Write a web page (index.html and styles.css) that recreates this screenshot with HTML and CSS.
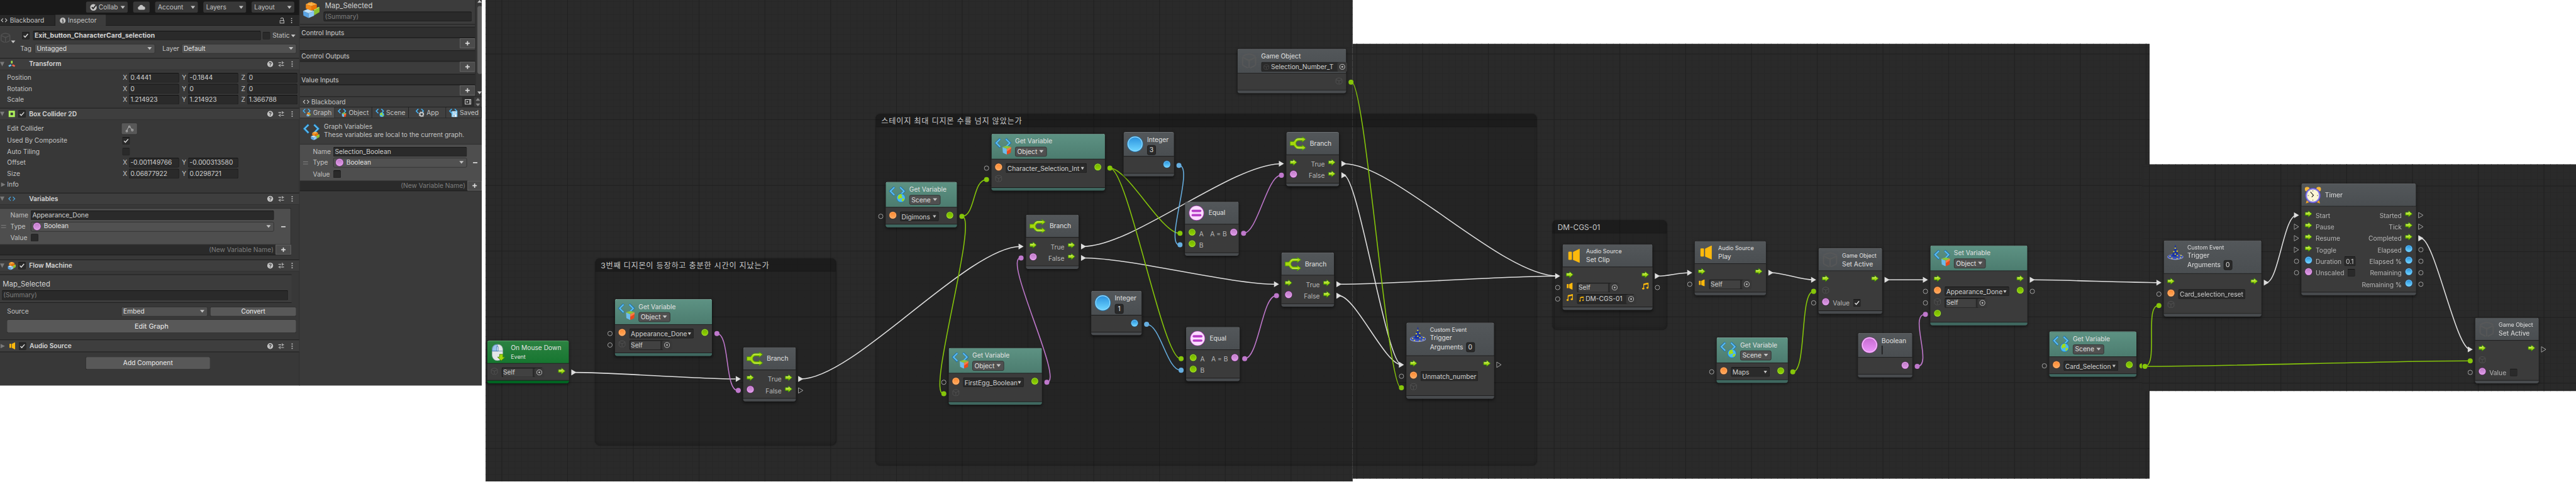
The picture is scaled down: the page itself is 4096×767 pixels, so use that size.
FILE: index.html
```html
<!DOCTYPE html>
<html lang="en">
<head>
<meta charset="utf-8">
<title>Map_Selected graph</title>
<link rel="stylesheet" href="styles.css">
</head>
<body>
<svg class="sprite" aria-hidden="true">
  <defs>
    <linearGradient id="gArrow" x1="0" y1="0" x2="0" y2="1"><stop offset="0" stop-color="#c6ec3a"/><stop offset="1" stop-color="#8cc800"/></linearGradient>
    <linearGradient id="gOrange" x1="0" y1="0" x2="0" y2="1"><stop offset="0" stop-color="#ff8a32"/><stop offset="1" stop-color="#ffa85c"/></linearGradient>
    <linearGradient id="gGreen" x1="0" y1="0" x2="0" y2="1"><stop offset="0" stop-color="#74b400"/><stop offset="1" stop-color="#92d400"/></linearGradient>
    <linearGradient id="gPurple" x1="0" y1="0" x2="0" y2="1"><stop offset="0" stop-color="#c07cc8"/><stop offset="1" stop-color="#dd98e6"/></linearGradient>
    <linearGradient id="gPink" x1="0" y1="0" x2="0" y2="1"><stop offset="0" stop-color="#c66cd2"/><stop offset="1" stop-color="#ea92f8"/></linearGradient>
    <linearGradient id="gBlue" x1="0" y1="0" x2="0" y2="1"><stop offset="0" stop-color="#2c93de"/><stop offset="1" stop-color="#6cd4ff"/></linearGradient>
  </defs>
  <symbol id="arrow" viewBox="0 0 14 13"><path d="M.8 3.8H6.5V.9L13.2 6.4 6.5 12V9.1H.8z" fill="url(#gArrow)" stroke="#3d8a06" stroke-width="1.1"/><path d="M1.8 5H7.4V3.2" fill="none" stroke="#e6f7a0" stroke-width=".8"/></symbol>
  <symbol id="orange" viewBox="0 0 14 14"><circle cx="7" cy="7" r="6.7" fill="#d96c1c"/><circle cx="7" cy="7" r="6" fill="#ffc08a"/><circle cx="7" cy="7" r="5.2" fill="url(#gOrange)"/></symbol>
  <symbol id="green" viewBox="0 0 14 14"><circle cx="7" cy="7" r="6.7" fill="#3f7d04"/><circle cx="7" cy="7" r="6" fill="#b4e050"/><circle cx="7" cy="7" r="5.2" fill="url(#gGreen)"/></symbol>
  <symbol id="purple" viewBox="0 0 14 14"><circle cx="7" cy="7" r="6.7" fill="#a03cae"/><circle cx="7" cy="7" r="6" fill="#f0bcf4"/><circle cx="7" cy="7" r="5.2" fill="url(#gPurple)"/></symbol>
  <symbol id="blue" viewBox="0 0 14 14"><circle cx="7" cy="7" r="6.7" fill="#1670b4"/><circle cx="7" cy="7" r="6" fill="#8ed2f8"/><circle cx="7" cy="7" r="5.2" fill="url(#gBlue)"/></symbol>
  <symbol id="bigblue" viewBox="0 0 30 30"><circle cx="15" cy="15" r="14.6" fill="#1f7fbe"/><circle cx="15" cy="15" r="13.6" fill="#a0e0ff"/><circle cx="15" cy="15" r="12.4" fill="url(#gBlue)"/></symbol>
  <symbol id="bigpink" viewBox="0 0 30 30"><circle cx="15" cy="15" r="14.8" fill="#9a3ca8"/><circle cx="15" cy="15" r="14" fill="#fbc4ff"/><circle cx="15" cy="15" r="12.4" fill="url(#gPink)"/></symbol>
  <symbol id="equal" viewBox="0 0 28 28"><circle cx="14" cy="14" r="13.8" fill="#a838b4"/><circle cx="14" cy="14" r="12.9" fill="#fbdcff"/><rect x="5" y="8" width="18" height="4.2" rx="2.1" fill="#b63cc6"/><rect x="5" y="15.8" width="18" height="4.2" rx="2.1" fill="#b63cc6"/></symbol>
  <symbol id="branch" viewBox="0 0 30 26"><path d="M.7 9.4H7.6C10 5.600 12 3.200 16.500 3.200h7.200L22.800.8 29.400 5.200 22.800 10.600l.6-2.800h-6.600c-3.600 0-5.300 2.600-5.300 5.200s1.700 5.200 5.300 5.200h6.600L22.800 15.400 29.400 20.800 22.800 25.400l.9-2.600H16.500C12 22.800 10 20.400 7.600 16.600H.7z" fill="#a6d80c" stroke="#4a9a04" stroke-width="1.1"/><path d="M11 6.600Q13.500 4.300 17 4.500h7M12.500 20.600q2 1 4.500.9h7" fill="none" stroke="#e4f6a0" stroke-width=".8"/></symbol>
  <symbol id="chev" viewBox="0 0 30 30"><path d="M10 1.300 2.200 9l7.800 8M20 1.300 27.800 9 20 17" fill="none" stroke="#1c6ea8" stroke-width="4"/><path d="M9.800 2 2.600 9l7.200 7.300M20.200 2 27.400 9l-7.200 7.300" fill="none" stroke="#5cbcf0" stroke-width="2.400"/></symbol>
  <symbol id="cube" viewBox="0 0 16 17"><path d="M0 3 8 6.400V17L.8 13.400z" fill="#6cbcec"/><path d="M16 3 8 6.400V17l7.200-3.600z" fill="#e8481c"/><path d="M0 3 8 .4 16 3 8 6.400z" fill="#8cc43c"/><path d="M8 6.400 16 3l-.2 3L8 11z" fill="#f87c48"/></symbol>
  <symbol id="globe" viewBox="0 0 17 17"><circle cx="8.500" cy="8.500" r="8.200" fill="#1c7ec4"/><circle cx="8.500" cy="8.500" r="7.200" fill="#48b8f4"/><path d="M4 3.600C6 1.400 9 1.200 10.600 1.800L9 4.800l2.400 1.400L9.600 9 6.600 8.600 5 11 2.600 8.400zM10 10.600l3.400-1.800 1.800 1.600-2 3.400-3 1.200z" fill="#a4dc18"/></symbol>
  <symbol id="var-obj" viewBox="0 0 30 30"><use href="#chev" width="30" height="30"/><use href="#cube" x="14" y="13.400" width="16" height="17"/></symbol>
  <symbol id="var-scene" viewBox="0 0 30 30"><use href="#chev" width="30" height="30"/><use href="#globe" x="13.400" y="13" width="17" height="17"/></symbol>
  <symbol id="lego" viewBox="0 0 30 30"><path d="M19 14l11-4v9l-10 6z" fill="#8cc030"/><path d="M19 14l9-4 2 .4-9 5z" fill="#c4ea6c"/><path d="M0 17l10 4v9L.6 25.400z" fill="#5aa4e4"/><path d="M10 21l10-4v8.600L10 30z" fill="#8ac6f6"/><path d="M0 17l9.600-4L20 17l-10 4z" fill="#bfe2fb"/><path d="M5 4.400 15 8v8.600L5 12.400z" fill="#f08a1c"/><path d="M15 8l10-3.600v8L15 16.600z" fill="#e87408"/><path d="M5 4.400 15 .6l10 3.800L15 8z" fill="#ffb650"/><ellipse cx="12" cy="2.800" rx="2.600" ry="1.500" fill="#ffa22c"/><ellipse cx="18" cy="4" rx="2.600" ry="1.500" fill="#ffa22c"/></symbol>
  <symbol id="var-graph" viewBox="0 0 30 30"><use href="#chev" width="30" height="30"/><use href="#lego" x="14" y="14" width="16" height="16"/></symbol>
  <symbol id="var-app" viewBox="0 0 30 30"><use href="#chev" width="30" height="30"/><circle cx="21" cy="20" r="6" fill="none" stroke="#c8c8c8" stroke-width="4"/><circle cx="21" cy="20" r="8.600" fill="none" stroke="#c8c8c8" stroke-width="3" stroke-dasharray="3.200 3.500"/></symbol>
  <symbol id="var-saved" viewBox="0 0 30 30"><use href="#chev" width="30" height="30"/><path d="M9 9h21v21H9z" fill="#6cc0f0"/><path d="M13 10h13v7H13zM13 20h13v10H13z" fill="#eef6fc"/><path d="M16 22h3v6h-3zM15 12h9v2h-9z" fill="#4088b8"/></symbol>
  <symbol id="ghost" viewBox="0 0 30 30"><g fill="none" stroke="#5a5a5a" stroke-width="2.400" opacity=".75"><path d="M3 8v13q0 2 2 3l8 4M27 8v13q0 2-2 3l-8 4"/><path d="M3 7Q9 3 15 2.500q6 .5 12 4.500M4 9l9 4.500h4L26 9M15 13.500V28"/></g></symbol>
  <symbol id="speaker" viewBox="0 0 22 26"><rect x=".5" y="5.500" width="6.500" height="15" rx="1.500" fill="#fdb90c"/><path d="M9 6 20.500.3q.7 0 .7.700v24q0 .7-.7.700L9 20.500z" fill="#fdb90c"/></symbol>
  <symbol id="note" viewBox="0 0 12 13"><path d="M3 11V3l8-2v8.600" fill="none" stroke="#fdb90c" stroke-width="1.400"/><path d="M3.200 1.800 11.600.2v2.600L3.200 4.600z" fill="#fdb90c"/><ellipse cx="2.200" cy="11" rx="2" ry="1.700" fill="#fdb90c"/><ellipse cx="9.800" cy="9.600" rx="2" ry="1.700" fill="#fdb90c"/></symbol>
  <symbol id="hat" viewBox="0 0 30 30"><ellipse cx="15" cy="24" rx="14.600" ry="5.400" fill="#8a96dc"/><ellipse cx="15" cy="23.400" rx="13.600" ry="4.400" fill="#3a50b4"/><path d="M15 1Q17.500 13 21.500 22q-6.500 3.500-13 0Q12.500 13 15 1z" fill="#1c34a0"/><path d="M13.500 7h2.500v2h-2.500zM17 12.500h2.500v2H17zM11 13.500h2.500v2H11zM13.500 18h2.500v2h-2.500zM17.500 20.500h2.500v2h-2.500zM4 22h2.500v1.800H4zM24 20.500h2.500v1.800H24zM7.500 25.500H10v1.800H7.500zM17 26.500h2.500V28H17zM23 24.500h2.500v1.600H23z" fill="#f4e624"/></symbol>
  <symbol id="clock" viewBox="0 0 30 31"><circle cx="4.500" cy="4.500" r="4.300" fill="#f6b83c"/><circle cx="25.500" cy="4.500" r="4.300" fill="#f6b83c"/><path d="M2 30.500 4 24l5 4zM28 30.500 26 24l-5 4z" fill="#f0a428"/><circle cx="15" cy="16" r="14" fill="#5a4cc8"/><circle cx="15" cy="16" r="12.800" fill="#8c84ec"/><circle cx="15" cy="16" r="11" fill="#fbf6d4"/><path d="M10.500 9.500 16 15.500 12.800 18.800" fill="none" stroke="#222" stroke-width="1.300"/><path d="M15 6.500v2M15 23.500v2M5.500 16h2M22.500 16h2" stroke="#444" stroke-width=".9"/></symbol>
  <symbol id="mouse" viewBox="0 0 25 31"><path d="M10.500.8C16 .8 20 4 20.300 10v9c0 7-4 11.500-9.800 11.500S.8 26 .8 19v-9C1.100 4 5 .8 10.500.8z" fill="#e4e6e8" stroke="#9aa"/><path d="M10.500 1C5 1 1.100 4 1 13h9.500z" fill="#9cc4ec" stroke="#3a6ca8" stroke-width=".8"/><path d="M1 13h19.200M9 5h3v8H9z" stroke="#4a7ab0" stroke-width=".8" fill="#c4dcf4"/><path d="M14.500 19h6v5h4L17.500 30.500 10.800 24h3.700z" fill="#a2d80c" stroke="#4a8a04"/></symbol>
  <symbol id="tri" viewBox="0 0 10 12"><path d="M.3.5 9.600 6 .3 11.500z" fill="#dedede"/></symbol>
  <symbol id="trio" viewBox="0 0 10 12"><path d="M.8 1 9 6 .8 11z" fill="none" stroke="#b4b4b4"/></symbol>
  <symbol id="ring" viewBox="0 0 10 12"><circle cx="5" cy="6" r="4.100" fill="none" stroke="#b4b4b4"/></symbol>
  <symbol id="dot" viewBox="0 0 10 12"><circle cx="5" cy="6" r="4.600" fill="currentColor"/></symbol>
  <symbol id="check" viewBox="0 0 14 14"><path d="M3.300 7.200 5.800 9.900 10.900 4" fill="none" stroke="#e4e4e4" stroke-width="1.600"/></symbol>
  <symbol id="target" viewBox="0 0 12 12"><circle cx="6" cy="6" r="4.600" fill="none" stroke="#c4c4c4" stroke-width="1.100"/><circle cx="6" cy="6" r="1.500" fill="#c4c4c4"/></symbol>
  <symbol id="help" viewBox="0 0 12 12"><circle cx="6" cy="6" r="5.400" fill="#c4c4c4"/><path d="M4.200 4.700Q4.300 3 6 3t1.800 1.500Q7.800 5.600 6 6.400V7.300M6 8.100v1.300" fill="none" stroke="#3a3a3a" stroke-width="1.300"/></symbol>
  <symbol id="sliders" viewBox="0 0 12 12"><path d="M1 3.500h5M8.500 3.500H11M1 8.500h2.500M6 8.500h5M8 1v5M4 6v5" stroke="#c4c4c4" stroke-width="1.300"/></symbol>
  <symbol id="kebab" viewBox="0 0 4 12"><path d="M1 1h2v2H1zM1 5h2v2H1zM1 9h2v2H1z" fill="#c4c4c4"/></symbol>
  <symbol id="code" viewBox="0 0 14 10"><path d="M5 1.500 1.500 5 5 8.500M9 1.500 12.500 5 9 8.500" fill="none" stroke="currentColor" stroke-width="1.400"/></symbol>
</svg>

<div class="screen">
<div class="stage">
  <section class="inspector">
    <div class="topbar">
      <span class="tb collab"><svg width="13" height="13" viewBox="0 0 13 13"><circle cx="6.500" cy="6.500" r="6" fill="#c4c4c4"/><path d="M3.500 6 6 8.800 11 2.500" fill="none" stroke="#222" stroke-width="2"/></svg>Collab<i class="dn"></i></span>
      <span class="tb cloud"><svg width="14" height="10" viewBox="0 0 14 10"><path d="M3.500 10a3.300 3.300 0 0 1-.4-6.500A4 4 0 0 1 10.600 3.800 3.100 3.100 0 0 1 10.800 10z" fill="#c4c4c4"/></svg></span>
      <span class="tb drop">Account<i class="dn"></i></span>
      <span class="tb drop">Layers<i class="dn"></i></span>
      <span class="tb drop">Layout<i class="dn"></i></span>
    </div>
    <div class="tabs">
      <span class="tab t1"><svg width="13" height="10"><use href="#code"/></svg>Blackboard</span>
      <span class="tab t2"><svg width="11" height="11" viewBox="0 0 11 11"><circle cx="5.500" cy="5.500" r="5.300" fill="#c4c4c4"/><path d="M4 4.800h2v3.600M4 8.400h3.400M4.900 2.700h1.200" stroke="#333" stroke-width="1.300" fill="none"/></svg>Inspector</span>
      <span class="grow"></span>
      <svg width="9" height="11" viewBox="0 0 9 11"><path d="M.7 5.500h7.600v4.800H.7zM2.200 2.800Q2.500.8 4.800.8T7 3v2.500" fill="none" stroke="#c4c4c4" stroke-width="1.200"/></svg>
      <svg class="kb" width="4" height="11"><use href="#kebab"/></svg>
    </div>
    <div class="objhead">
      <div class="objicon"><svg width="20" height="20"><use href="#ghost"/></svg><i class="dn"></i></div>
      <div class="objrows">
        <div class="orow r1"><span class="cb"><svg width="14" height="14"><use href="#check"/></svg></span><span class="inp bold">Exit_button_CharacterCard_selection</span><span class="cb"></span><span class="st">Static</span><i class="dn"></i></div>
        <div class="orow r2"><span class="lb">Tag</span><span class="sel tag">Untagged<i class="dn"></i></span><span class="lb2">Layer</span><span class="sel layer">Default<i class="dn"></i></span></div>
      </div>
    </div>

    <div class="comp"><i class="fold"></i><svg class="ci" width="14" height="14" viewBox="0 0 14 14"><path d="M7 1v5" stroke="#a4e04c" stroke-width="3"/><path d="M6 8.500 1.500 11" stroke="#6cc4f4" stroke-width="3"/><path d="M8 8.500l4.500 2.500" stroke="#f4684c" stroke-width="3"/></svg><span class="cb none"></span><b>Transform</b><span class="grow"></span><span class="acts"><svg width="12" height="12"><use href="#help"/></svg><svg width="12" height="12"><use href="#sliders"/></svg><svg width="4" height="12"><use href="#kebab"/></svg></span></div>
    <div class="props transform">
      <div class="prop"><span class="pl">Position</span><em>X</em><span class="inp">0.4441</span><em>Y</em><span class="inp">-0.1844</span><em>Z</em><span class="inp">0</span></div>
      <div class="prop"><span class="pl">Rotation</span><em>X</em><span class="inp">0</span><em>Y</em><span class="inp">0</span><em>Z</em><span class="inp">0</span></div>
      <div class="prop"><span class="pl">Scale</span><em>X</em><span class="inp">1.214923</span><em>Y</em><span class="inp">1.214923</span><em>Z</em><span class="inp">1.366788</span></div>
    </div>

    <div class="comp"><i class="fold"></i><svg class="ci" width="14" height="14" viewBox="0 0 14 14"><path d="M3 3h8v8H3z" fill="#3a3a3a" stroke="#aef25c" stroke-width="3.400"/></svg><span class="cb"><svg width="14" height="14"><use href="#check"/></svg></span><b>Box Collider 2D</b><span class="grow"></span><span class="acts"><svg width="12" height="12"><use href="#help"/></svg><svg width="12" height="12"><use href="#sliders"/></svg><svg width="4" height="12"><use href="#kebab"/></svg></span></div>
    <div class="props collider">
      <div class="prop edit"><span class="pl">Edit Collider</span><span class="ebtn"><svg width="15" height="13" viewBox="0 0 15 13"><path d="M2.500 9 6 2.500h2l4 6" fill="none" stroke="#c8c8c8"/><path d="M1 9h2.500v2.800H1zM5.800 1h2.500v2.500H5.800zM11 7h2.800v3H11z" fill="#585858" stroke="#c8c8c8"/></svg></span></div>
      <div class="prop"><span class="pl">Used By Composite</span><span class="cb c2"><svg width="14" height="14"><use href="#check"/></svg></span></div>
      <div class="prop"><span class="pl">Auto Tiling</span><span class="cb c2"></span></div>
      <div class="prop"><span class="pl">Offset</span><em>X</em><span class="inp">-0.001149766</span><em>Y</em><span class="inp">-0.000313580</span></div>
      <div class="prop"><span class="pl">Size</span><em>X</em><span class="inp">0.06877922</span><em>Y</em><span class="inp">0.0298721</span></div>
      <div class="prop info"><i class="fold side"></i><span>Info</span></div>
    </div>

    <div class="comp"><i class="fold"></i><svg class="ci blue" width="14" height="10"><use href="#code"/></svg><span class="cb none"></span><b>Variables</b><span class="grow"></span><span class="acts"><svg width="12" height="12"><use href="#help"/></svg><svg width="12" height="12"><use href="#sliders"/></svg><svg width="4" height="12"><use href="#kebab"/></svg></span></div>
    <div class="varlist">
      <div class="varcard">
        <i class="grip"></i>
        <div class="vrows">
          <div class="vrow"><span class="vl">Name</span><span class="inp">Appearance_Done</span></div>
          <div class="vrow"><span class="vl">Type</span><span class="sel"><svg width="15" height="15"><use href="#purple"/></svg>Boolean<i class="dn"></i></span></div>
          <div class="vrow"><span class="vl">Value</span><span class="cb"></span></div>
        </div>
        <span class="minus"></span>
      </div>
      <div class="newvar"><span>(New Variable Name)</span><i class="plus"></i></div>
    </div>

    <div class="comp"><i class="fold"></i><svg class="ci" width="15" height="15"><use href="#lego"/></svg><span class="cb"><svg width="14" height="14"><use href="#check"/></svg></span><b>Flow Machine</b><span class="grow"></span><span class="acts"><svg width="12" height="12"><use href="#help"/></svg><svg width="12" height="12"><use href="#sliders"/></svg><svg width="4" height="12"><use href="#kebab"/></svg></span></div>
    <div class="machine">
      <div class="mbox"><span class="mt">Map_Selected</span><span class="inp dim">(Summary)</span></div>
      <div class="mrow"><span class="pl">Source</span><span class="sel">Embed<i class="dn"></i></span><span class="btn">Convert</span></div>
      <span class="btn wide">Edit Graph</span>
    </div>

    <div class="comp last"><i class="fold side"></i><svg class="ci" width="11" height="13"><use href="#speaker"/></svg><span class="cb"><svg width="14" height="14"><use href="#check"/></svg></span><b>Audio Source</b><span class="grow"></span><span class="acts"><svg width="12" height="12"><use href="#help"/></svg><svg width="12" height="12"><use href="#sliders"/></svg><svg width="4" height="12"><use href="#kebab"/></svg></span></div>
    <div class="addrow"><span class="btn add">Add Component</span></div>
  </section>

  <section class="board">
    <div class="gtop">
      <div class="gmain">
        <div class="ghead"><svg width="30" height="30"><use href="#lego"/></svg><div><span class="mt">Map_Selected</span><span class="inp dim">(Summary)</span></div></div>
        <div class="plist"><h4>Control Inputs</h4><div><i class="plus"></i></div></div>
        <div class="plist"><h4>Control Outputs</h4><div><i class="plus"></i></div></div>
        <div class="plist"><h4>Value Inputs</h4><div><i class="plus"></i></div></div>
      </div>
      <div class="scroll"><i class="up"></i><span></span><i class="dn"></i></div>
    </div>
    <div class="bbar"><svg width="13" height="10"><use href="#code"/></svg><span>Blackboard</span><span class="dock"><svg width="12" height="10" viewBox="0 0 12 10"><path d="M.7.7h10.600v8.600H.7zM9 1v8" fill="none" stroke="#d0d0d0" stroke-width="1.300"/><path d="M3.500 3l3 2-3 2z" fill="#d0d0d0"/></svg></span><span class="spin"><i class="up"></i><i class="dn"></i></span></div>
    <div class="vtabs">
      <span class="on"><svg width="15" height="15"><use href="#var-graph"/></svg>Graph</span>
      <span><svg width="16" height="16"><use href="#var-obj"/></svg>Object</span>
      <span><svg width="16" height="16"><use href="#var-scene"/></svg>Scene</span>
      <span><svg width="16" height="16"><use href="#var-app"/></svg>App</span>
      <span><svg width="16" height="16"><use href="#var-saved"/></svg>Saved</span>
    </div>
    <div class="vinfo"><svg width="30" height="30"><use href="#var-graph"/></svg><div><p>Graph Variables</p><p class="sub">These variables are local to the current graph.</p></div></div>
    <div class="varcard">
      <i class="grip"></i>
      <div class="vrows">
        <div class="vrow"><span class="vl">Name</span><span class="inp">Selection_Boolean</span></div>
        <div class="vrow"><span class="vl">Type</span><span class="sel"><svg width="15" height="15"><use href="#purple"/></svg>Boolean<i class="dn"></i></span></div>
        <div class="vrow"><span class="vl">Value</span><span class="cb"></span></div>
      </div>
      <span class="minus"></span>
    </div>
    <div class="newvar"><span>(New Variable Name)</span><i class="plus"></i></div>
  </section>

  <section class="graph">
    <div class="pane pane-a"></div>
    <div class="pane pane-b"></div>
    <div class="pane pane-c"></div>

    <div class="group g-appear"><h3>3번째 디지몬이 등장하고 충분한 시간이 지났는가</h3></div>
    <div class="group g-stage"><h3>스테이지 최대 디지몬 수를 넘지 않았는가</h3></div>
    <div class="group g-clip"><h3>DM-CGS-01</h3></div>

    <svg class="edges" width="4700" height="880" viewBox="0 0 4700 880">
      <g class="ew">
        <path d="M1047 680C1122 680 1267 692 1342 692"/>
        <path d="M1461 692C1558 692 1766 450 1862 450"/>
        <path d="M1977 450C2067 450 2247 299 2338 299"/>
        <path d="M1977 471C2065 471 2240 519 2329 519"/>
        <path d="M2452 299C2545 299 2740 504 2842 504"/>
        <path d="M2452 320C2478 320 2530 666 2557 666"/>
        <path d="M2443 519C2543 519 2742 504 2842 504"/>
        <path d="M2443 540C2473 540 2527 666 2557 666"/>
        <path d="M3024 504C3046 504 3060 498 3083 498"/>
        <path d="M3231 498C3256 498 3283 511 3309 511"/>
        <path d="M3443 511H3513"/>
        <path d="M3708 511C3768 511 3880 516 3939 516"/>
        <path d="M4135 516C4157 516 4167 393 4190 393"/>
        <path d="M4417 435C4442 435 4481 638 4507 638"/>
      </g>
      <g class="eg">
        <path d="M1755 395C1780 395 1774 328 1800 328"/>
        <path d="M1755 395C1787 395 1690 719 1721 719"/>
        <path d="M2025 307C2058 307 2119 426 2152 426"/>
        <path d="M2025 307C2058 307 2121 655 2154 655"/>
        <path d="M2466 150C2491 150 2531 708 2556 708"/>
        <path d="M3271 679C3297 679 3283 532 3309 532"/>
        <path d="M3913 669C3939 669 3912 558 3938 558"/>
        <path d="M3913 669C4060 669 4360 659 4506 659"/>
      </g>
      <g class="ep">
        <path d="M1308 609C1332 609 1322 713 1346 713"/>
        <path d="M1910 698C1943 698 1829 471 1862 471"/>
        <path d="M2269 426C2294 426 2312 320 2337 320"/>
        <path d="M2271 655C2296 655 2303 540 2328 540"/>
        <path d="M3498 669C3527 669 3483 574 3512 574"/>
      </g>
      <g class="eb">
        <path d="M2151 302C2180 302 2124 447 2152 447"/>
        <path d="M2092 592C2117 592 2129 676 2154 676"/>
      </g>
      <path d="M3908 663.500a4.600 4.600 0 0 0 0 9.200z" fill="#86c60a"/>
      <circle cx="3913.500" cy="669" r="4.600" fill="#86c60a"/>
    </svg>

    <article class="node event n-down">
      <header><svg width="25" height="31"><use href="#mouse"/></svg><div><p>On Mouse Down</p><p class="sm">Event</p></div></header>
      <div class="body">
        <div class="row"><svg class="ic gh" width="14" height="14"><use href="#ghost"/></svg><span class="obj"><i>Self</i><b><svg width="12" height="12"><use href="#target"/></svg></b></span><span class="grow"></span><svg class="ic" width="14" height="13"><use href="#arrow"/></svg><svg class="pt out"><use href="#tri"/></svg></div>
      </div>
    </article>

    <article class="node teal n-appear">
      <header><svg width="30" height="30"><use href="#var-obj"/></svg><div><p>Get Variable</p><span class="kind">Object<i class="dn"></i></span></div></header>
      <div class="body">
        <div class="row"><svg class="pt in"><use href="#ring"/></svg><svg class="ic" width="14" height="14"><use href="#orange"/></svg><span class="combo">Appearance_Done<i class="dn"></i></span><svg class="ic" width="14" height="14"><use href="#green"/></svg><svg class="pt out p"><use href="#dot"/></svg></div>
        <div class="row"><svg class="pt in"><use href="#ring"/></svg><svg class="ic gh" width="14" height="14"><use href="#ghost"/></svg><span class="obj"><i>Self</i><b><svg width="12" height="12"><use href="#target"/></svg></b></span></div>
      </div>
    </article>

    <article class="node n-branch1">
      <header><svg width="30" height="26"><use href="#branch"/></svg><div><p>Branch</p></div></header>
      <div class="body">
        <div class="row"><svg class="pt in"><use href="#tri"/></svg><svg class="ic" width="14" height="13"><use href="#arrow"/></svg><span class="grow"></span><span class="tx">True</span><svg class="ic" width="14" height="13"><use href="#arrow"/></svg><svg class="pt out"><use href="#tri"/></svg></div>
        <div class="row"><svg class="pt in p"><use href="#dot"/></svg><svg class="ic" width="14" height="14"><use href="#purple"/></svg><span class="grow"></span><span class="tx">False</span><svg class="ic" width="14" height="13"><use href="#arrow"/></svg><svg class="pt out"><use href="#trio"/></svg></div>
      </div>
    </article>

    <article class="node teal n-digimons">
      <header><svg width="30" height="30"><use href="#var-scene"/></svg><div><p>Get Variable</p><span class="kind">Scene<i class="dn"></i></span></div></header>
      <div class="body">
        <div class="row"><svg class="pt in"><use href="#ring"/></svg><svg class="ic" width="14" height="14"><use href="#orange"/></svg><span class="combo">Digimons<i class="dn"></i></span><svg class="ic" width="14" height="14"><use href="#green"/></svg><svg class="pt out g"><use href="#dot"/></svg></div>
      </div>
    </article>

    <article class="node teal n-charsel">
      <header><svg width="30" height="30"><use href="#var-obj"/></svg><div><p>Get Variable</p><span class="kind">Object<i class="dn"></i></span></div></header>
      <div class="body">
        <div class="row"><svg class="pt in"><use href="#ring"/></svg><svg class="ic" width="14" height="14"><use href="#orange"/></svg><span class="combo">Character_Selection_Int<i class="dn"></i></span><svg class="ic" width="14" height="14"><use href="#green"/></svg><svg class="pt out g"><use href="#dot"/></svg></div>
        <div class="row"><svg class="pt in g"><use href="#dot"/></svg><svg class="ic gh" width="14" height="14"><use href="#ghost"/></svg></div>
      </div>
    </article>

    <article class="node n-branch2">
      <header><svg width="30" height="26"><use href="#branch"/></svg><div><p>Branch</p></div></header>
      <div class="body">
        <div class="row"><svg class="pt in"><use href="#tri"/></svg><svg class="ic" width="14" height="13"><use href="#arrow"/></svg><span class="grow"></span><span class="tx">True</span><svg class="ic" width="14" height="13"><use href="#arrow"/></svg><svg class="pt out"><use href="#tri"/></svg></div>
        <div class="row"><svg class="pt in p"><use href="#dot"/></svg><svg class="ic" width="14" height="14"><use href="#purple"/></svg><span class="grow"></span><span class="tx">False</span><svg class="ic" width="14" height="13"><use href="#arrow"/></svg><svg class="pt out"><use href="#tri"/></svg></div>
      </div>
    </article>

    <article class="node teal n-egg">
      <header><svg width="30" height="30"><use href="#var-obj"/></svg><div><p>Get Variable</p><span class="kind">Object<i class="dn"></i></span></div></header>
      <div class="body">
        <div class="row"><svg class="pt in"><use href="#ring"/></svg><svg class="ic" width="14" height="14"><use href="#orange"/></svg><span class="combo">FirstEgg_Boolean<i class="dn"></i></span><svg class="ic" width="14" height="14"><use href="#green"/></svg><svg class="pt out p"><use href="#dot"/></svg></div>
        <div class="row"><svg class="pt in g"><use href="#dot"/></svg><svg class="ic gh" width="14" height="14"><use href="#ghost"/></svg></div>
      </div>
    </article>

    <article class="node lit n-int3">
      <header><svg width="30" height="30"><use href="#bigblue"/></svg><div><p>Integer</p><span class="num">3</span></div></header>
      <div class="body"><div class="row"><span class="grow"></span><svg class="ic" width="14" height="14"><use href="#blue"/></svg><svg class="pt out b"><use href="#dot"/></svg></div></div>
    </article>

    <article class="node lit n-int1">
      <header><svg width="30" height="30"><use href="#bigblue"/></svg><div><p>Integer</p><span class="num">1</span></div></header>
      <div class="body"><div class="row"><span class="grow"></span><svg class="ic" width="14" height="14"><use href="#blue"/></svg><svg class="pt out b"><use href="#dot"/></svg></div></div>
    </article>

    <article class="node n-equal1">
      <header><svg width="30" height="28"><use href="#equal"/></svg><div><p>Equal</p></div></header>
      <div class="body">
        <div class="row"><svg class="pt in g"><use href="#dot"/></svg><svg class="ic" width="14" height="14"><use href="#green"/></svg><span class="tx">A</span><span class="grow"></span><span class="tx">A = B</span><svg class="ic" width="14" height="14"><use href="#purple"/></svg><svg class="pt out p"><use href="#dot"/></svg></div>
        <div class="row"><svg class="pt in b"><use href="#dot"/></svg><svg class="ic" width="14" height="14"><use href="#green"/></svg><span class="tx">B</span></div>
      </div>
    </article>

    <article class="node n-equal2">
      <header><svg width="30" height="28"><use href="#equal"/></svg><div><p>Equal</p></div></header>
      <div class="body">
        <div class="row"><svg class="pt in g"><use href="#dot"/></svg><svg class="ic" width="14" height="14"><use href="#green"/></svg><span class="tx">A</span><span class="grow"></span><span class="tx">A = B</span><svg class="ic" width="14" height="14"><use href="#purple"/></svg><svg class="pt out p"><use href="#dot"/></svg></div>
        <div class="row"><svg class="pt in b"><use href="#dot"/></svg><svg class="ic" width="14" height="14"><use href="#green"/></svg><span class="tx">B</span></div>
      </div>
    </article>

    <article class="node n-branch3">
      <header><svg width="30" height="26"><use href="#branch"/></svg><div><p>Branch</p></div></header>
      <div class="body">
        <div class="row"><svg class="pt in"><use href="#tri"/></svg><svg class="ic" width="14" height="13"><use href="#arrow"/></svg><span class="grow"></span><span class="tx">True</span><svg class="ic" width="14" height="13"><use href="#arrow"/></svg><svg class="pt out"><use href="#tri"/></svg></div>
        <div class="row"><svg class="pt in p"><use href="#dot"/></svg><svg class="ic" width="14" height="14"><use href="#purple"/></svg><span class="grow"></span><span class="tx">False</span><svg class="ic" width="14" height="13"><use href="#arrow"/></svg><svg class="pt out"><use href="#tri"/></svg></div>
      </div>
    </article>

    <article class="node n-branch4">
      <header><svg width="30" height="26"><use href="#branch"/></svg><div><p>Branch</p></div></header>
      <div class="body">
        <div class="row"><svg class="pt in"><use href="#tri"/></svg><svg class="ic" width="14" height="13"><use href="#arrow"/></svg><span class="grow"></span><span class="tx">True</span><svg class="ic" width="14" height="13"><use href="#arrow"/></svg><svg class="pt out"><use href="#tri"/></svg></div>
        <div class="row"><svg class="pt in p"><use href="#dot"/></svg><svg class="ic" width="14" height="14"><use href="#purple"/></svg><span class="grow"></span><span class="tx">False</span><svg class="ic" width="14" height="13"><use href="#arrow"/></svg><svg class="pt out"><use href="#tri"/></svg></div>
      </div>
    </article>

    <article class="node lit n-gobj">
      <header><svg width="30" height="30"><use href="#ghost"/></svg><div><p>Game Object</p><span class="asset"><svg width="11" height="11"><use href="#ghost"/></svg><i>Selection_Number_T</i><b><svg width="12" height="12"><use href="#target"/></svg></b></span></div></header>
      <div class="body"><div class="row"><span class="grow"></span><svg class="ic gh" width="14" height="14"><use href="#ghost"/></svg><svg class="pt out g"><use href="#dot"/></svg></div></div>
    </article>

    <article class="node trig n-trig1">
      <header><svg width="30" height="30"><use href="#hat"/></svg><div><p class="sm">Custom Event</p><p>Trigger</p><p>Arguments <span class="num">0</span></p></div></header>
      <div class="body">
        <div class="row"><svg class="pt in"><use href="#tri"/></svg><svg class="ic" width="14" height="13"><use href="#arrow"/></svg><span class="grow"></span><svg class="ic" width="14" height="13"><use href="#arrow"/></svg><svg class="pt out"><use href="#trio"/></svg></div>
        <div class="row"><svg class="pt in"><use href="#ring"/></svg><svg class="ic" width="14" height="14"><use href="#orange"/></svg><span class="field">Unmatch_number</span></div>
        <div class="row"><svg class="pt in g"><use href="#dot"/></svg><svg class="ic gh" width="14" height="14"><use href="#ghost"/></svg></div>
      </div>
    </article>

    <article class="node two n-clip">
      <header><svg width="30" height="26"><use href="#speaker"/></svg><div><p class="sm">Audio Source</p><p>Set Clip</p></div></header>
      <div class="body">
        <div class="row"><svg class="pt in"><use href="#tri"/></svg><svg class="ic" width="14" height="13"><use href="#arrow"/></svg><span class="grow"></span><svg class="ic" width="14" height="13"><use href="#arrow"/></svg><svg class="pt out"><use href="#tri"/></svg></div>
        <div class="row"><svg class="pt in"><use href="#ring"/></svg><svg class="ic" width="14" height="13"><use href="#speaker"/></svg><span class="obj"><i>Self</i><b><svg width="12" height="12"><use href="#target"/></svg></b></span><span class="grow"></span><svg class="ic" width="14" height="13"><use href="#note"/></svg><svg class="pt out"><use href="#ring"/></svg></div>
        <div class="row"><svg class="pt in"><use href="#ring"/></svg><svg class="ic" width="14" height="13"><use href="#note"/></svg><span class="asset"><svg width="9" height="10"><use href="#note"/></svg><i>DM-CGS-01</i><b><svg width="12" height="12"><use href="#target"/></svg></b></span></div>
      </div>
    </article>

    <article class="node two n-play">
      <header><svg width="30" height="26"><use href="#speaker"/></svg><div><p class="sm">Audio Source</p><p>Play</p></div></header>
      <div class="body">
        <div class="row"><svg class="pt in"><use href="#tri"/></svg><svg class="ic" width="14" height="13"><use href="#arrow"/></svg><span class="grow"></span><svg class="ic" width="14" height="13"><use href="#arrow"/></svg><svg class="pt out"><use href="#tri"/></svg></div>
        <div class="row"><svg class="pt in"><use href="#ring"/></svg><svg class="ic" width="14" height="13"><use href="#speaker"/></svg><span class="obj"><i>Self</i><b><svg width="12" height="12"><use href="#target"/></svg></b></span></div>
      </div>
    </article>

    <article class="node teal n-maps">
      <header><svg width="30" height="30"><use href="#var-scene"/></svg><div><p>Get Variable</p><span class="kind">Scene<i class="dn"></i></span></div></header>
      <div class="body">
        <div class="row"><svg class="pt in"><use href="#ring"/></svg><svg class="ic" width="14" height="14"><use href="#orange"/></svg><span class="combo">Maps<i class="dn"></i></span><svg class="ic" width="14" height="14"><use href="#green"/></svg><svg class="pt out g"><use href="#dot"/></svg></div>
      </div>
    </article>

    <article class="node two n-active1">
      <header><svg width="30" height="30"><use href="#ghost"/></svg><div><p class="sm">Game Object</p><p>Set Active</p></div></header>
      <div class="body">
        <div class="row"><svg class="pt in"><use href="#tri"/></svg><svg class="ic" width="14" height="13"><use href="#arrow"/></svg><span class="grow"></span><svg class="ic" width="14" height="13"><use href="#arrow"/></svg><svg class="pt out"><use href="#tri"/></svg></div>
        <div class="row"><svg class="pt in g"><use href="#dot"/></svg><svg class="ic gh" width="14" height="14"><use href="#ghost"/></svg></div>
        <div class="row"><svg class="pt in"><use href="#ring"/></svg><svg class="ic" width="14" height="14"><use href="#purple"/></svg><span class="tx">Value</span><span class="cb"><svg width="14" height="14"><use href="#check"/></svg></span></div>
      </div>
    </article>

    <article class="node n-bool lit">
      <header><svg width="30" height="30"><use href="#bigpink"/></svg><div><p>Boolean</p><span class="cb"></span></div></header>
      <div class="body"><div class="row"><span class="grow"></span><svg class="ic" width="14" height="14"><use href="#purple"/></svg><svg class="pt out p"><use href="#dot"/></svg></div></div>
    </article>

    <article class="node teal n-setvar">
      <header><svg width="30" height="30"><use href="#var-obj"/></svg><div><p>Set Variable</p><span class="kind">Object<i class="dn"></i></span></div></header>
      <div class="body">
        <div class="row"><svg class="pt in"><use href="#tri"/></svg><svg class="ic" width="14" height="13"><use href="#arrow"/></svg><span class="grow"></span><svg class="ic" width="14" height="13"><use href="#arrow"/></svg><svg class="pt out"><use href="#tri"/></svg></div>
        <div class="row"><svg class="pt in"><use href="#ring"/></svg><svg class="ic" width="14" height="14"><use href="#orange"/></svg><span class="combo">Appearance_Done<i class="dn"></i></span><svg class="ic" width="14" height="14"><use href="#green"/></svg><svg class="pt out"><use href="#ring"/></svg></div>
        <div class="row"><svg class="pt in"><use href="#ring"/></svg><svg class="ic gh" width="14" height="14"><use href="#ghost"/></svg><span class="obj"><i>Self</i><b><svg width="12" height="12"><use href="#target"/></svg></b></span></div>
        <div class="row"><svg class="pt in p"><use href="#dot"/></svg><svg class="ic" width="14" height="14"><use href="#green"/></svg></div>
      </div>
    </article>

    <article class="node teal n-card">
      <header><svg width="30" height="30"><use href="#var-scene"/></svg><div><p>Get Variable</p><span class="kind">Scene<i class="dn"></i></span></div></header>
      <div class="body">
        <div class="row"><svg class="pt in"><use href="#ring"/></svg><svg class="ic" width="14" height="14"><use href="#orange"/></svg><span class="combo">Card_Selection<i class="dn"></i></span><svg class="ic" width="14" height="14"><use href="#green"/></svg></div>
      </div>
    </article>

    <article class="node trig n-trig2">
      <header><svg width="30" height="30"><use href="#hat"/></svg><div><p class="sm">Custom Event</p><p>Trigger</p><p>Arguments <span class="num">0</span></p></div></header>
      <div class="body">
        <div class="row"><svg class="pt in"><use href="#tri"/></svg><svg class="ic" width="14" height="13"><use href="#arrow"/></svg><span class="grow"></span><svg class="ic" width="14" height="13"><use href="#arrow"/></svg><svg class="pt out"><use href="#tri"/></svg></div>
        <div class="row"><svg class="pt in"><use href="#ring"/></svg><svg class="ic" width="14" height="14"><use href="#orange"/></svg><span class="field">Card_selection_reset</span></div>
        <div class="row"><svg class="pt in g"><use href="#dot"/></svg><svg class="ic gh" width="14" height="14"><use href="#ghost"/></svg></div>
      </div>
    </article>

    <article class="node n-timer">
      <header><svg width="30" height="31"><use href="#clock"/></svg><div><p>Timer</p></div></header>
      <div class="body">
        <div class="row"><svg class="pt in"><use href="#tri"/></svg><svg class="ic" width="14" height="13"><use href="#arrow"/></svg><span class="tx">Start</span><span class="grow"></span><span class="tx">Started</span><svg class="ic" width="14" height="13"><use href="#arrow"/></svg><svg class="pt out"><use href="#trio"/></svg></div>
        <div class="row"><svg class="pt in"><use href="#trio"/></svg><svg class="ic" width="14" height="13"><use href="#arrow"/></svg><span class="tx">Pause</span><span class="grow"></span><span class="tx">Tick</span><svg class="ic" width="14" height="13"><use href="#arrow"/></svg><svg class="pt out"><use href="#trio"/></svg></div>
        <div class="row"><svg class="pt in"><use href="#trio"/></svg><svg class="ic" width="14" height="13"><use href="#arrow"/></svg><span class="tx">Resume</span><span class="grow"></span><span class="tx">Completed</span><svg class="ic" width="14" height="13"><use href="#arrow"/></svg><svg class="pt out"><use href="#tri"/></svg></div>
        <div class="row"><svg class="pt in"><use href="#trio"/></svg><svg class="ic" width="14" height="13"><use href="#arrow"/></svg><span class="tx">Toggle</span><span class="grow"></span><span class="tx">Elapsed</span><svg class="ic" width="14" height="14"><use href="#blue"/></svg><svg class="pt out"><use href="#ring"/></svg></div>
        <div class="row"><svg class="pt in"><use href="#ring"/></svg><svg class="ic" width="14" height="14"><use href="#blue"/></svg><span class="tx">Duration</span><span class="field dur">0.1</span><span class="grow"></span><span class="tx">Elapsed %</span><svg class="ic" width="14" height="14"><use href="#blue"/></svg><svg class="pt out"><use href="#ring"/></svg></div>
        <div class="row"><svg class="pt in"><use href="#ring"/></svg><svg class="ic" width="14" height="14"><use href="#purple"/></svg><span class="tx">Unscaled</span><span class="cb"></span><span class="grow"></span><span class="tx">Remaining</span><svg class="ic" width="14" height="14"><use href="#blue"/></svg><svg class="pt out"><use href="#ring"/></svg></div>
        <div class="row"><span class="grow"></span><span class="tx">Remaining %</span><svg class="ic" width="14" height="14"><use href="#blue"/></svg><svg class="pt out"><use href="#ring"/></svg></div>
      </div>
    </article>

    <article class="node two n-active2">
      <header><svg width="30" height="30"><use href="#ghost"/></svg><div><p class="sm">Game Object</p><p>Set Active</p></div></header>
      <div class="body">
        <div class="row"><svg class="pt in"><use href="#tri"/></svg><svg class="ic" width="14" height="13"><use href="#arrow"/></svg><span class="grow"></span><svg class="ic" width="14" height="13"><use href="#arrow"/></svg><svg class="pt out"><use href="#trio"/></svg></div>
        <div class="row"><svg class="pt in g"><use href="#dot"/></svg><svg class="ic gh" width="14" height="14"><use href="#ghost"/></svg></div>
        <div class="row"><svg class="pt in"><use href="#ring"/></svg><svg class="ic" width="14" height="14"><use href="#purple"/></svg><span class="tx">Value</span><span class="cb"></span></div>
      </div>
    </article>
  </section>
</div>
</div>
</body>
</html>
```

FILE: styles.css
```css
* { box-sizing: border-box; margin: 0; padding: 0; }
html, body { width: 4096px; height: 767px; overflow: hidden; background: #fff; }
body { font: 11.75px/14px Inter, "Noto Sans CJK KR", sans-serif; color: #c4c4c4; }
i, em { font-style: normal; }
svg { display: block; flex: none; }
.sprite { position: absolute; width: 0; height: 0; }
.screen { width: 4096px; height: 767px; overflow: hidden; }
.stage { position: relative; display: flex; align-items: flex-start; width: 4700px; height: 880px; transform: scale(.871489); transform-origin: 0 0; white-space: nowrap; overflow: hidden; }
.grow { flex: 1; }

/* shared controls */
.dn { width: 0; height: 0; border: 4px solid transparent; border-top: 5px solid #c4c4c4; border-bottom: 0; flex: none; }
.up { width: 0; height: 0; border: 4px solid transparent; border-bottom: 5px solid #c4c4c4; border-top: 0; flex: none; }
.cb { width: 14px; height: 14px; background: #2a2a2a; border: 1px solid #212121; border-top-color: #0d0d0d; border-radius: 2px; flex: none; }
.cb svg { margin: -1px; }
.cb.none { visibility: hidden; }
.inp { display: flex; align-items: center; height: 18px; padding-left: 2px; background: #2a2a2a; border: 1px solid #212121; border-top-color: #0d0d0d; border-radius: 3px; color: #d2d2d2; }
.inp.bold { font-weight: 700; font-size: 12px; letter-spacing: .06px; }
.inp.dim { color: #7f7f7f; }
.sel { display: flex; align-items: center; height: 18px; padding: 0 5px 1px 3px; background: #515151; border: 1px solid #303030; border-radius: 3px; color: #e4e4e4; }
.sel .dn { margin-left: auto; }
.btn { display: flex; align-items: center; justify-content: center; height: 18px; background: #585858; border: 1px solid #303030; border-bottom-color: #242424; border-radius: 3px; color: #eee; }
.plus { display: block; width: 28px; height: 18px; background: linear-gradient(#d8d8d8, #d8d8d8) center / 8px 2px no-repeat, linear-gradient(#d8d8d8, #d8d8d8) center / 2px 8px no-repeat, #4b4b4b; border: 1px solid #686868; flex: none; }
.minus { width: 8px; height: 2px; background: #d8d8d8; flex: none; }
.grip { width: 9px; height: 5px; border: solid #888; border-width: 1px 0; flex: none; }

/* inspector */
.inspector { width: 547px; height: 704px; background: #383838; border-right: 1px solid #1c1c1c; overflow: hidden; flex: none; }
.topbar { display: flex; gap: 10px; align-items: center; height: 28px; padding: 0 9px 2px 157px; background: #191919; }
.tb { display: flex; align-items: center; height: 20px; background: #383838; border-radius: 3px; }
.collab { width: 76px; padding-left: 7px; gap: 3px; }
.collab .dn { margin-left: 2px; }
.cloud { width: 30px; justify-content: center; }
.drop { width: 78px; padding: 0 5px; justify-content: space-between; }
.tabs { display: flex; align-items: center; height: 19px; background: #282828; border-bottom: 1px solid #1c1c1c; }
.tab { display: flex; align-items: center; height: 20px; }
.t1 { width: 101px; padding-left: 1px; gap: 4px; border-right: 1px solid #1c1c1c; }
.t2 { width: 92px; padding-left: 8px; gap: 4px; background: #3c3c3c; }
.kb { margin: 0 12px 0 11px; }
.objhead { display: flex; height: 59px; background: #3c3c3c; }
.objicon { width: 40px; padding-top: 12px; }
.objicon .dn { margin: -1px 0 0 20px; }
.objrows { flex: 1; padding: 9px 5px 0 0; }
.orow { display: flex; align-items: center; height: 18px; }
.r1 .inp { width: 416px; margin: 0 3px 0 6px; }
.r1 .st { margin: 0 3px 0 4px; }
.r2 { margin-top: 6px; }
.tag { width: 220px; margin-left: 4px; }
.lb { width: 22px; margin-left: -3px; }
.lb2 { margin: 0 4px 0 auto; }
.layer { width: 210px; }
.comp { display: flex; align-items: center; height: 22px; background: #3e3e3e; border-top: 1px solid #1a1a1a; border-bottom: 1px solid #303030; }
.fold { width: 0; height: 0; border: 4.5px solid transparent; border-top: 8px solid #7a7a7a; border-bottom: 0; flex: none; }
.fold.side { border: 4.5px solid transparent; border-left: 8px solid #7a7a7a; border-right: 0; margin-left: 1px; }
.ci { margin-left: 6px; width: 15px; }
.ci.blue { color: #4aa8e4; }
.comp .cb { margin: 0 6px 0 4px; }
.comp b { font-weight: 600; color: #d6d6d6; }
.acts { display: flex; gap: 8px; margin-right: 11px; }
.acts svg:last-child { margin-left: 4px; }
.props { padding-left: 13px; }
.transform { height: 69px; padding-top: 4px; }
.collider { height: 133px; padding-top: 4px; }
.prop { display: flex; align-items: center; height: 20px; }
.pl { width: 211px; flex: none; }
.prop em { width: 11px; flex: none; }
.prop .inp { width: 91.5px; margin-right: 5.5px; flex: none; }
.ebtn { display: grid; place-items: center; width: 30px; height: 22px; margin-left: -3px; background: #585858; border: 1px solid #303030; border-radius: 3px; }
.collider .edit { height: 24px; }
.c2 { margin-left: -1px; }
.info .fold { margin: 0 3px 0 -11px; }
.varlist { margin: 6px 15px 8px 0; }
.varcard { display: flex; align-items: center; height: 67px; background: #4e4e4e; border: 1px solid #2a2a2a; border-left: 0; }
.varlist .grip { margin: 0 8px 0 2px; }
.vrows { display: flex; flex-direction: column; gap: 2.5px; width: 481px; }
.vrow { display: flex; align-items: center; height: 18px; }
.vl { width: 37px; }
.vrow .inp, .vrow .sel { flex: 1; }
.vrow .sel svg { margin-right: 5px; }
.varlist .minus { margin-left: 13px; }
.newvar { display: flex; align-items: center; height: 19px; background: #2a2a2a; border-bottom: 1px solid #1c1c1c; color: #7f7f7f; }
.newvar span { flex: 1; text-align: right; padding-right: 4px; }
.machine { height: 124px; padding-top: 5px; }
.mbox { width: 532px; height: 52px; padding: 9px 6px 0 3px; background: #3c3c3c; border: solid #1c1c1c; border-width: 1px 0; }
.mt { display: block; height: 19px; padding-left: 2px; font-size: 13px; color: #d2d2d2; }
.mrow { display: flex; align-items: center; height: 18px; margin: 7px 5px 5px 13px; }
.mrow .pl { width: 208px; }
.mrow .sel { width: 158px; }
.mrow .btn { flex: 1; margin-left: 4px; }
.btn.wide { height: 25px; margin: 0 5px 0 12px; font-size: 12.5px; }
.comp.last { border-bottom-color: #1a1a1a; height: 23px; }
.addrow { display: flex; padding: 8px 0 0 156px; }
.btn.add { width: 228px; height: 24px; }

/* blackboard */
.board { width: 332px; height: 704px; background: #3a3a3a; overflow: hidden; flex: none; }
.gtop { display: flex; height: 176px; background: #3c3c3c; }
.gmain { width: 320px; }
.ghead { display: flex; gap: 7px; height: 45px; padding: 3px 6px 0; border-bottom: 1px solid #1c1c1c; }
.ghead > div { flex: 1; }
.ghead .mt { margin-left: 1px; height: 18px; }
.plist { margin-top: 4px; height: 39px; }
.plist h4 { height: 20px; padding: 3px 0 0 3px; font-size: 11.75px; font-weight: 400; background: #2f2f2f; border: 1px solid #1c1c1c; border-width: 1px 0; color: #d0d0d0; }
.plist div { display: flex; justify-content: flex-end; border-top: 1px solid #262626; }
.scroll { display: flex; flex-direction: column; align-items: center; width: 12px; padding: 0 0 4px 3px; background: #363636; border-left: 1px solid #2a2a2a; }
.scroll span { width: 9px; height: 124px; margin: 6px 0 auto; background: #5e5e5e; border-radius: 5px; }
.bbar { display: flex; align-items: center; gap: 3px; height: 19px; padding-left: 5px; background: #3c3c3c; border-top: 1px solid #1c1c1c; }
.dock { display: grid; place-items: center; width: 22px; height: 19px; margin-left: auto; background: #2c2c2c; }
.spin { display: flex; flex-direction: column; gap: 5px; width: 11px; opacity: .6; }
.vtabs { display: grid; grid-template-columns: 64px 68px 67px 68px 65px; height: 21px; border: solid #1c1c1c; border-width: 1px 0; }
.vtabs span { display: flex; align-items: center; justify-content: center; gap: 4px; background: #404040; border-right: 1px solid #1c1c1c; }
.vtabs .on { background: #525252; }
.vinfo { display: flex; gap: 8px; height: 47px; padding: 10px 6px; background: #3c3c3c; }
.vinfo p { height: 15px; margin-top: -2px; margin-bottom: 2px; }
.board .varcard { border: 0; border-top: 1px solid #2a2a2a; }
.board .grip { margin: 0 9px 0 6px; }
.board .vrows { width: 281px; }
.board .minus { margin-left: 11px; }
.board .newvar .plus { width: 26px; }

/* graph canvas */
.pane { position: absolute; background-color: #2a2a2a; background-image: linear-gradient(#202020 1px, transparent 1px), linear-gradient(90deg, #202020 1px, transparent 1px), linear-gradient(#272727 1px, transparent 1px), linear-gradient(90deg, #272727 1px, transparent 1px); background-size: 120px 120px, 120px 120px, 12px 12px, 12px 12px; }
.pane-a { left: 886px; top: 0; width: 1582px; height: 879px; background-position: 0 98px, 29px 0, 0 2px, 5px 0; }
.pane-b { left: 2468px; top: 80px; width: 1454px; height: 794px; background-position: 0 18px, 7px 0, 0 6px, 7px 0; }
.pane-c { left: 3908px; top: 300px; width: 792px; height: 414px; background-position: 0 39px, 13px 0, 0 3px, 1px 0; }
.group { position: absolute; border-radius: 9px; background: rgba(0, 0, 0, .12); box-shadow: inset 0 -3px 6px rgba(0, 0, 0, .15), 0 0 2px rgba(0, 0, 0, .4); overflow: hidden; }
.group h3 { height: 24px; padding: 4px 10px; background: rgba(0, 0, 0, .2); border-bottom: 1px solid #1a1a1a; font-size: 13.6px; line-height: 19px; font-weight: 400; color: #c8c8c8; }
.g-appear { left: 1086px; top: 472px; width: 439px; height: 341px; }
.g-stage { left: 1598px; top: 208px; width: 1206px; height: 642px; }
.g-appear h3, .g-stage h3 { font-size: 14px; letter-spacing: .84px; padding-top: 3px; }
.g-clip { left: 2832px; top: 402px; width: 209px; height: 200px; }
.edges { position: absolute; left: 0; top: 0; fill: none; }
.edges path { stroke-width: 1.8; }
.ew { stroke: #dedede; } .eg { stroke: #86c60a; } .ep { stroke: #bf78cc; } .eb { stroke: #66aee0; }

.node { position: absolute; border-radius: 4px; box-shadow: 0 2px 5px rgba(0, 0, 0, .5); }
.node::after { content: ""; display: block; height: 5px; background: #484b4e; border-radius: 0 0 4px 4px; }
.node header { display: flex; gap: 7px; height: 42px; padding: 6px; align-items: center; background: linear-gradient(#53575a, #4a4e51); border-top: 1px solid #6e7174; border-bottom: 1px solid #1a1a1a; border-radius: 4px 4px 0 0; color: #e2e2e2; }
.node .sm { font-size: 10.2px; }
.teal header { height: 47px; align-items: flex-start; padding-top: 7px; background: linear-gradient(#5d9283, #4c7c6f); border-top-color: #8ab5a8; }
.teal::after { background: #3f6860; }
.teal p { margin: -1px 0 3px; height: 14px; }
.event header { background: linear-gradient(#2c8241, #167630); border-top-color: #5aa86c; }
.event header svg { margin: 0 3px 0 2px; }
.event::after { background: #006422; }
.event p + p, .two p + p { margin-top: 2.5px; }
.lit header { height: 45px; align-items: flex-start; padding-top: 6px; }
.lit p { height: 14px; margin-bottom: 3px; }
.trig header { height: 61px; align-items: flex-start; padding-top: 5px; }
.trig p + p { margin-top: 1px; }
.trig p:last-child { display: flex; align-items: center; gap: 5px; height: 18px; }
.kind { display: inline-flex; align-items: center; gap: 4px; height: 18px; padding: 0 5px 1px 3px; background: #505050; border: 1px solid #303030; border-radius: 3px; }
.num { display: grid; place-items: center; width: 16px; height: 18px; background: #2a2a2a; border: 1px solid #1c1c1c; border-radius: 3px; }
.body { display: flex; flex-direction: column; gap: 3px; padding: 7px 6px 5px; background: #3b3b3b; border-bottom: 1px solid #1a1a1a; }
.row { position: relative; display: flex; align-items: center; height: 18px; gap: 6px; }
.ic { margin-bottom: 5px; }
.pt { position: absolute; top: 3px; width: 10px; height: 12px; color: #86c60a; }
.pt.in { left: -20px; } .pt.out { right: -20px; }
.p { color: #bf78cc; } .b { color: #66aee0; }
.tx { color: #b8b8b8; padding-top: 1px; }
.combo, .field, .obj, .asset { display: flex; align-items: center; height: 18px; background: #2a2a2a; border: 1px solid #212121; border-top-color: #111; border-radius: 3px; color: #d2d2d2; }
.combo { flex: 1; margin-right: 7px; padding: 1px 0 0 2px; }
.combo .dn { margin-left: auto; margin-right: 4px; border-width: 5px 3.5px 0; }
.field { padding: 1px 3px 0 2px; }
.obj { width: 75px; padding-left: 2px; background: #2a2a2a; }
.obj i { width: 54px; background: #414141; line-height: 15px; }
.obj b, .asset b { display: grid; place-items: center; width: 18px; height: 17px; background: #383838; border-radius: 3px; margin: 0 -4px 0 auto; }
.asset { padding-left: 3px; gap: 3px; }
.asset b { margin-left: 4px; }
.dur { margin-left: -1px; }

.n-down { left: 889px; top: 622px; width: 149px; }
.n-appear { left: 1122px; top: 546px; width: 177px; }
.n-branch1 { left: 1356px; top: 634px; width: 96px; }
.n-digimons { left: 1616px; top: 332px; width: 130px; }
.n-charsel { left: 1809px; top: 244px; width: 207px; }
.n-branch2 { left: 1872px; top: 392px; width: 96px; }
.n-egg { left: 1731px; top: 635px; width: 170px; }
.n-int3 { left: 2050px; top: 241px; width: 92px; }
.n-int1 { left: 1991px; top: 531px; width: 92px; }
.n-equal1 { left: 2162px; top: 368px; width: 98px; }
.n-equal2 { left: 2164px; top: 597px; width: 98px; }
.n-branch3 { left: 2347px; top: 241px; width: 96px; }
.n-branch4 { left: 2338px; top: 461px; width: 96px; }
.n-gobj { left: 2258px; top: 89px; width: 198px; }
.n-trig1 { left: 2566px; top: 589px; width: 160px; }
.n-clip { left: 2851px; top: 446px; width: 164px; }
.n-play { left: 3092px; top: 440px; width: 130px; }
.n-maps { left: 3132px; top: 616px; width: 130px; }
.n-active1 { left: 3318px; top: 453px; width: 116px; }
.n-bool { left: 3390px; top: 608px; width: 99px; }
.n-setvar { left: 3522px; top: 448px; width: 177px; }
.n-card { left: 3739px; top: 605px; width: 159px; }
.n-trig2 { left: 3948px; top: 439px; width: 178px; }
.n-timer { left: 4199px; top: 335px; width: 209px; }
.n-active2 { left: 4516px; top: 580px; width: 116px; }
```
